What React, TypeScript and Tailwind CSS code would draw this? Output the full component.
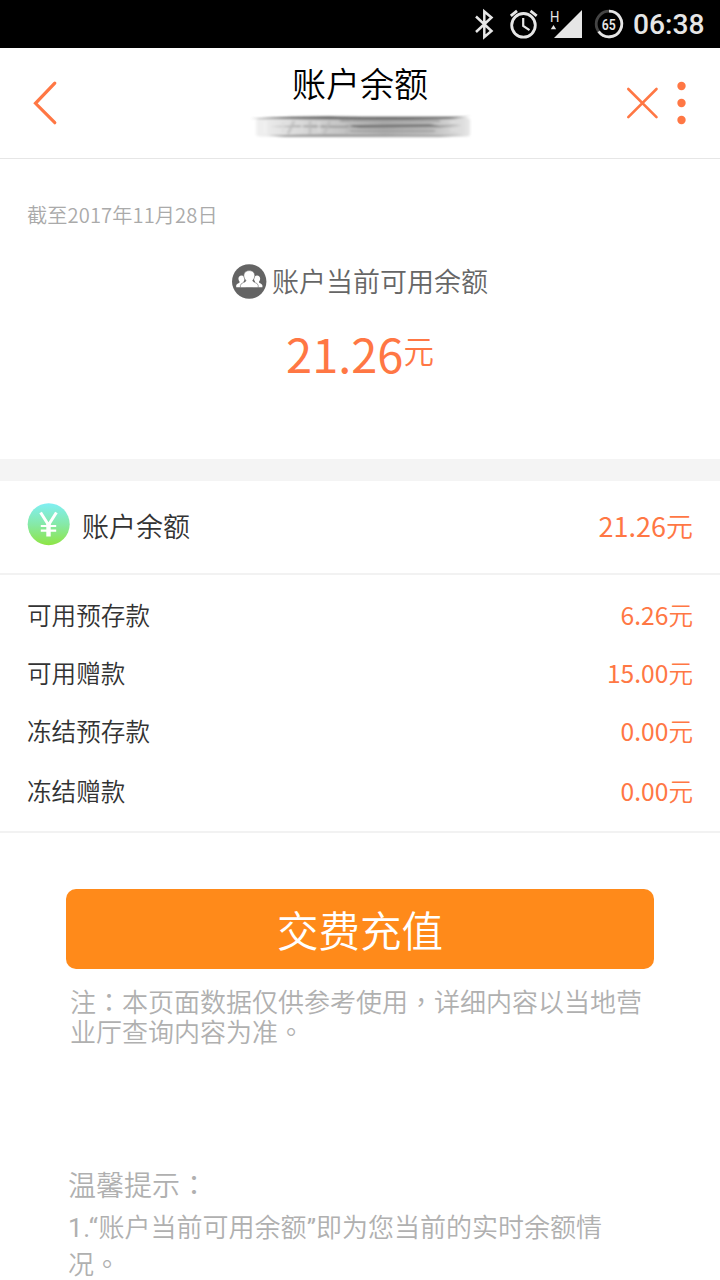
import type { ReactNode } from 'react';

const rows = [
  { label: '可用预存款', value: '6.26', height: 'h-[58px]' },
  { label: '可用赠款', value: '15.00', height: 'h-[58px]' },
  { label: '冻结预存款', value: '0.00', height: 'h-[58px]' },
  { label: '冻结赠款', value: '0.00', height: 'h-[61px]' },
];

/** Full-width punctuation set in the middle of its box. */
function Mark({ children }: { children: ReactNode }) {
  return (
    <span lang="zh-TW" className="font-['Noto_Sans_CJK_TC_DemiLight','Noto_Sans_CJK_TC',sans-serif]">
      {children}
    </span>
  );
}

/** An amount of money in yuan: the digits are a little heavier than the unit. */
function Money({ amount }: { amount: string }) {
  return (
    <span className="text-[#ff7744]">
      <span className="font-['Noto_Sans_CJK_SC',sans-serif] font-normal">{amount}</span>元
    </span>
  );
}

function StatusBar() {
  return (
    <div className="flex h-12 shrink-0 items-center bg-black pl-[470px] text-[#e6e6e6]">
      <svg className="h-12 w-[163px] shrink-0" viewBox="470 0 163 48" fill="none">
        <path
          d="M476 16.5L491.5 31L484.3 37V11.5L491.5 17.5L476 32"
          stroke="#e6e6e6"
          strokeWidth="2.5"
        />
        <circle cx="523.5" cy="25.3" r="11.8" stroke="#e6e6e6" strokeWidth="2.8" />
        <path d="M523.2 18V26L529.5 30.2" stroke="#e6e6e6" strokeWidth="2.2" />
        <path d="M510.8 15.8L517 10.8M530.5 10.8L536.7 15.8" stroke="#e6e6e6" strokeWidth="2.8" />
        <path d="M554 38L582 10V38Z" fill="#e6e6e6" />
        <path d="M550.8 29.2L553.5 25L556.2 29.2Z" fill="#e6e6e6" />
        <text x="550" y="22" fill="#e6e6e6" fontSize="15.5" fontWeight="400" textLength="9.4" lengthAdjust="spacingAndGlyphs" fontFamily="Roboto, sans-serif">
          H
        </text>
        <circle cx="609" cy="24" r="12.8" stroke="#444" strokeWidth="2.8" />
        <path d="M609 11.2A12.8 12.8 0 1 1 598.6 31.5" stroke="#e6e6e6" strokeWidth="2.8" />
        <text x="608.7" y="29.8" fill="#e6e6e6" fontSize="14" fontWeight="600" textAnchor="middle" textLength="14" lengthAdjust="spacingAndGlyphs" fontFamily="Roboto, sans-serif">
          65
        </text>
      </svg>
      <span className="mt-[3px] whitespace-nowrap font-[Roboto,sans-serif] text-[28.2px] font-medium leading-none">
        06:38
      </span>
    </div>
  );
}

function Smudge() {
  return (
    <svg className="h-[28px] w-[224px]" viewBox="248 112 224 28">
      <defs>
        <linearGradient id="ink" x1="0" x2="1" y1="0" y2="0">
          <stop offset="0" stopColor="#f0f0f0" />
          <stop offset="0.2" stopColor="#dadada" />
          <stop offset="0.42" stopColor="#c2c2c2" />
          <stop offset="0.6" stopColor="#adadad" />
          <stop offset="0.8" stopColor="#bcbcbc" />
          <stop offset="1" stopColor="#e6e6e6" />
        </linearGradient>
        <filter id="soft" x="-10%" y="-60%" width="120%" height="220%">
          <feGaussianBlur stdDeviation="1.8 0.8" />
        </filter>
      </defs>
      <g filter="url(#soft)">
        <rect x="256" y="118" width="214" height="18.5" rx="3" fill="url(#ink)" />
        <path d="M251 118.6Q300 116 340 116.4T470 116.8L448 119Q350 120.4 251 118.6Z" fill="#606060" />
        <path d="M270 126.5Q310 125 350 126T462 125L440 127.6Q360 128.6 270 126.5Z" fill="#979797" />
        <path d="M345 125L430 124L440 126L360 128Z" fill="#777777" />
        <path d="M268 135.5Q320 134 370 135T465 135.2L440 136.8H285Z" fill="#8d8d8d" />
        <path d="M340 121H440M350 131H435" stroke="#9c9c9c" strokeWidth="1.6" />
        <path d="M294 121L288 134M310 121V134M330 121L324 134M352 121L346 134" stroke="#b9b9b9" strokeWidth="2" />
        <path d="M265 121V134" stroke="#f3f3f3" strokeWidth="2.5" />
        <path d="M283 122V133M302 122V132M319 122V132" stroke="#dcdcdc" strokeWidth="2" />
        <path d="M450 122h8M450 130h9" stroke="#dedede" strokeWidth="2" />
      </g>
    </svg>
  );
}

function Header() {
  return (
    <header className="flex h-[111px] shrink-0 items-start justify-between border-b border-[#e6e6e6]">
      <div className="flex w-[120px] pt-[30px] pl-7">
        <svg className="h-[50px] w-[34px]" viewBox="28 78 34 50" fill="none">
          <path d="M54.8 83.2L35.5 103.3L54.8 122.7" stroke="#ff7744" strokeWidth="3.2" strokeLinecap="round" />
        </svg>
      </div>
      <div className="flex flex-col items-center">
        <h1 className="mt-[10px] text-[34px] leading-[50px] text-black">账户余额</h1>
        <div className="mt-[4px]">
          <Smudge />
        </div>
      </div>
      <div className="flex w-[120px] pt-[27px] pl-5">
        <svg className="h-[56px] w-[74px]" viewBox="620 75 74 56" fill="none">
          <path d="M628.3 89L656.5 117.2M656.5 89L628.3 117.2" stroke="#ff7744" strokeWidth="2.6" strokeLinecap="round" />
          <circle cx="681.5" cy="86" r="4.2" fill="#ff7744" />
          <circle cx="681.5" cy="103" r="4.2" fill="#ff7744" />
          <circle cx="681.5" cy="120" r="4.2" fill="#ff7744" />
        </svg>
      </div>
    </header>
  );
}

export default function App() {
  return (
    <main
      lang="zh-CN"
      className="flex h-[1280px] w-[720px] flex-col overflow-hidden bg-white font-['Noto_Sans_CJK_SC_DemiLight','Noto_Sans_CJK_SC',sans-serif] font-[350]"
    >
      <StatusBar />
      <Header />

      <section className="h-[300px] shrink-0">
        <p className="pt-[41px] pl-[27px] text-[20.15px] leading-[30px] tracking-[0.12px] text-[#aaaaaa]">
          截至2017年11月28日
        </p>
        <div className="mt-[31px] flex h-10 items-center justify-center text-[#666666]">
          <svg className="mr-[5px] h-[35px] w-[35px]" viewBox="0 0 35 35">
            <circle cx="17.2" cy="17.5" r="17.2" fill="#646464" />
            <path
              d="M4.2 23.2V21.5C4.2 19.6 7.8 19.3 7.6 17.8C5.4 15 6.4 11.6 9.6 11.6C12.6 11.6 13.6 15 11.5 17.8C11.5 19.3 13.5 19.3 13.8 20.2V23.2Z M30.4 23.2V21.5C30.4 19.6 26.8 19.3 27 17.8C29.2 15 28.2 11.6 25 11.6C22 11.6 21 15 23.1 17.8C23.1 19.3 21.1 19.3 20.8 20.2V23.2Z"
              fill="white"
            />
            <path
              d="M8.4 23.6V21.5C8.4 18.6 13.9 18.6 13.9 16.6C10 12 11.8 6.6 17.3 6.6S24.6 12 20.7 16.6C20.7 18.6 26.2 18.6 26.2 21.5V23.6Z"
              fill="white"
              stroke="#646464"
              strokeWidth="0.6"
            />
          </svg>
          <span className="text-[27px] leading-10">账户当前可用余额</span>
        </div>
        <div className="mt-[17px] flex items-start justify-center text-[#ff7744]">
          <span className="font-['Noto_Sans_CJK_SC',sans-serif] text-[47px] font-normal leading-[70px]">21.26</span>
          <span className="text-[30.5px] leading-[65px]">元</span>
        </div>
      </section>

      <div className="h-[22px] shrink-0 bg-[#f4f4f4]" />

      <section className="flex h-[94px] shrink-0 items-center border-b-2 border-[#f2f2f2] pr-[27px] pb-[2px] pl-[27px]">
        <svg className="mb-[3px] h-[43px] w-[43px]" viewBox="0 0 43 43">
          <defs>
            <linearGradient id="coin" x1="0" x2="0" y1="0" y2="1">
              <stop offset="0" stopColor="#80eff4" />
              <stop offset="0.5" stopColor="#86e9a8" />
              <stop offset="1" stopColor="#8ee544" />
            </linearGradient>
          </defs>
          <circle cx="21.7" cy="21.2" r="21" fill="url(#coin)" />
          <path d="M13.6 9.5L21.5 22L29.4 9.5" fill="none" stroke="white" strokeWidth="3" />
          <path d="M21.5 21V33.5" stroke="white" strokeWidth="4.4" />
          <path d="M13.8 23H29.2M13.8 27.7H29.2" stroke="white" strokeWidth="2.2" />
        </svg>
        <h2 className="ml-3 text-[27px] leading-10 text-[#333333]">账户余额</h2>
        <div className="ml-auto text-[27px] leading-10">
          <Money amount="21.26" />
        </div>
      </section>

      <section className="h-[258px] shrink-0 border-b-2 border-[#f2f2f2] px-[27px] pt-[10px]">
        {rows.map((row) => (
          <div key={row.label} className={`flex items-center justify-between text-[24.6px] leading-9 ${row.height}`}>
            <span className="text-[#333333]">{row.label}</span>
            <Money amount={row.value} />
          </div>
        ))}
      </section>

      <button className="mx-[66px] mt-[56px] h-20 shrink-0 rounded-[10px] bg-[#ff8a1a] text-[41.5px] leading-[60px] text-white">
        交费充值
      </button>
      <p className="mt-[17px] ml-[70px] shrink-0 whitespace-nowrap text-[26px] leading-[30px] text-[#b0b0b0]">
        注<Mark>：</Mark>本页面数据仅供参考使用<Mark>，</Mark>详细内容以当地营
        <br />
        业厅查询内容为准<Mark>。</Mark>
      </p>

      <section className="mt-[118px] ml-[68px] shrink-0 whitespace-nowrap text-[#b0b0b0]">
        <h3 className="text-[28px] leading-10">
          温馨提示<Mark>：</Mark>
        </h3>
        <div className="mt-[3px] text-[26px] leading-[38px]">
          <p className="h-[37px]">
            <span className="font-[Roboto,sans-serif] font-normal tracking-[0.7px]">1.“</span>账户当前可用余额
            <span className="font-[Roboto,sans-serif] font-normal">”</span>即为您当前的实时余额情
          </p>
          <p>
            况<Mark>。</Mark>
          </p>
        </div>
      </section>
    </main>
  );
}
